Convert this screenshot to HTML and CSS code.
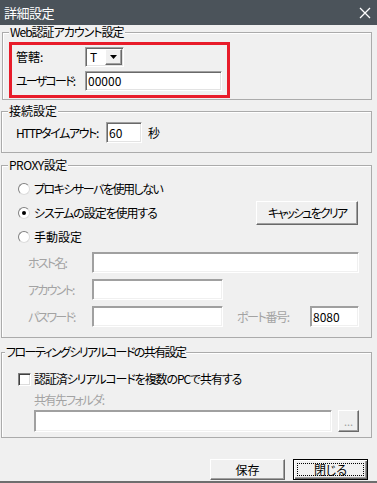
FILE: index.html
```html
<!DOCTYPE html>
<html lang="ja">
<head>
<meta charset="utf-8">
<title>詳細設定</title>
<link rel="stylesheet" href="styles.css">
</head>
<body>
<div class="window">
  <div class="titlebar">
    <span class="title">詳細設定</span>
    <svg class="close" width="12" height="12" viewBox="0 0 12 12"><path d="M1 1L11 11M11 1L1 11" stroke="#fff" stroke-width="1.3" fill="none"/></svg>
  </div>

  <div class="group g1">
    <div class="legend ls10">Web認証アカウント設定</div>
    <div class="redbox">
      <div class="row r20">
        <span class="lbl w69">管轄:</span>
        <div class="select">
          <span class="sel-val">T</span>
          <span class="sel-btn"><svg width="7" height="4" viewBox="0 0 7 4"><path d="M0 0H7L3.5 4Z" fill="#000"/></svg></span>
        </div>
      </div>
      <div class="row r20 mt4">
        <span class="lbl w69 ls18">ユーザコード:</span>
        <div class="input w137 h20">00000</div>
      </div>
    </div>
  </div>

  <div class="group g2">
    <div class="legend">接続設定</div>
    <div class="row r21 pl14 mt4">
      <span class="lbl w90 ls14">HTTPタイムアウト:</span>
      <div class="input w36 h21">60</div>
      <span class="lbl sec">秒</span>
    </div>
  </div>

  <div class="group g3">
    <div class="legend ls05">PROXY設定</div>
    <div class="radios">
      <div class="row r20"><span class="radio"></span><span class="lbl ls15">プロキシサーバを使用しない</span></div>
      <div class="row r24 between">
        <div class="row"><span class="radio on"></span><span class="lbl ls11">システムの設定を使用する</span></div>
        <button class="btn cache"><span class="ls18">キャッシュをクリア</span></button>
      </div>
      <div class="row r20"><span class="radio"></span><span class="lbl">手動設定</span></div>
    </div>
    <div class="fields">
      <div class="row r21"><span class="lbl dis w64 ls18">ホスト名:</span><div class="input dinput w267 h21"></div></div>
      <div class="row r21"><span class="lbl dis w64 ls18">アカウント:</span><div class="input dinput w131 h21"></div></div>
      <div class="row r21">
        <span class="lbl dis w64 ls18">パスワード:</span><div class="input dinput w131 h21"></div>
        <span class="lbl dis w73 ml14 ls14">ポート番号:</span><div class="input dinput w49 h21">8080</div>
      </div>
    </div>
  </div>

  <div class="group g4">
    <div class="legend l4 ls16">フローティングシリアルコードの共有設定</div>
    <div class="row r20 chkrow"><span class="check"></span><span class="lbl ls11">認証済シリアルコードを複数のPCで共有する</span></div>
    <div class="row r20 folderlbl"><span class="lbl dis ls14">共有先フォルダ:</span></div>
    <div class="row r22 folderrow">
      <div class="input dinput w298 h22"></div>
      <button class="btn dots">...</button>
    </div>
  </div>

  <div class="footer">
    <button class="btn action">保存</button>
    <button class="btn action default"><span class="focus">閉じる</span></button>
  </div>
</div>
</body>
</html>
```

FILE: styles.css
```css
* { box-sizing: border-box; }
html, body { margin: 0; padding: 0; }
body {
  width: 377px;
  height: 483px;
  background: #f0f0f0;
  font-family: "Noto Sans CJK JP", "Noto Sans", sans-serif;
  font-size: 12px;
  line-height: 14px;
  color: #000;
  font-feature-settings: "palt";
  overflow: hidden;
}
.window {
  width: 377px;
  height: 483px;
  display: flex;
  flex-direction: column;
  border-bottom: 2px solid #6e6e6e;
}
.titlebar {
  height: 25px;
  flex: none;
  background: #4b535a;
  color: #fff;
  display: flex;
  align-items: center;
  justify-content: space-between;
  padding: 0 6px 0 4px;
}
.title { font-size: 13px; letter-spacing: -0.5px; }
.close { display: block; }

.ls05 { letter-spacing: -0.5px; }
.ls10 { letter-spacing: -1px; }
.ls11 { letter-spacing: -1.1px; }
.ls14 { letter-spacing: -1.4px; }
.ls15 { letter-spacing: -1.5px; }
.ls16 { letter-spacing: -1.6px; }
.ls18 { letter-spacing: -1.8px; }

.group {
  margin-left: 1px;
  width: 371px;
  border: 1px solid #ababab;
  box-shadow: inset 1px 1px 0 #fff;
  flex: none;
}
.legend {
  margin: -8px 0 0 6px;
  width: fit-content;
  background: #f0f0f0;
  padding: 0 1px;
  line-height: 14px;
  height: 14px;
}
.l4 { margin-left: 3px; }

.row { display: flex; align-items: center; }
.r20 { height: 20px; }
.r21 { height: 21px; }
.r22 { height: 22px; }
.r24 { height: 24px; }
.between { justify-content: space-between; }
.mt4 { margin-top: 4px; }
.pl14 { padding-left: 14px; }
.ml14 { margin-left: 14px; }

.lbl { white-space: nowrap; }
.dis { color: #a3a3a3; }
.w64 { width: 64px; flex: none; }
.w69 { width: 69px; flex: none; }
.w73 { width: 73px; flex: none; }
.w90 { width: 90px; flex: none; }
.sec { margin-left: 6px; }

.input {
  background: #fff;
  border-top: 1px solid #a0a0a0;
  border-left: 1px solid #a0a0a0;
  border-right: 1px solid #fff;
  border-bottom: 1px solid #fff;
  box-shadow: inset 1px 1px 0 #696969, inset -1px -1px 0 #e3e3e3;
  padding: 0 2px;
  display: flex;
  align-items: center;
  flex: none;
}
.dinput { box-shadow: inset 1px 1px 0 #a0a0a0, inset -1px -1px 0 #f0f0f0; }
.w36 { width: 36px; }
.w49 { width: 49px; }
.w131 { width: 131px; }
.w137 { width: 137px; }
.w267 { width: 267px; }
.w298 { width: 298px; }
.h20 { height: 20px; }
.h21 { height: 21px; }
.h22 { height: 22px; }

/* group 1 */
.g1 { margin-top: 7px; margin-left: 2px; width: 370px; }
.redbox {
  margin: 3px 0 1px 6px;
  width: 221px;
  height: 56px;
  border: 3px solid #e81c2a;
  padding: 2px 0 0 4px;
}
.select {
  width: 39px;
  height: 20px;
  background: #fff;
  border-top: 1px solid #a0a0a0;
  border-left: 1px solid #a0a0a0;
  border-right: 1px solid #fff;
  border-bottom: 1px solid #fff;
  box-shadow: inset 1px 1px 0 #696969, inset -1px -1px 0 #e3e3e3;
  display: flex;
  align-items: stretch;
  padding: 1px 1px 1px 1px;
}
.sel-val { flex: 1; padding-left: 3px; line-height: 16px; }
.sel-btn {
  width: 17px;
  background: #f0f0f0;
  border-top: 1px solid #fff;
  border-left: 1px solid #fff;
  border-right: 1px solid #696969;
  border-bottom: 1px solid #696969;
  box-shadow: inset -1px -1px 0 #a0a0a0;
  display: flex;
  align-items: center;
  justify-content: center;
}
.sel-btn svg { display: block; }

/* group 2 */
.g2 { margin-top: 11px; height: 42px; }

/* group 3 */
.g3 { margin-top: 12px; height: 173px; }
.radios {
  margin-top: 7px;
  padding: 0 13px 0 16px;
  display: flex;
  flex-direction: column;
  gap: 2px;
}
.radio {
  width: 12px;
  height: 12px;
  border-radius: 50%;
  background: #fff;
  border: 1px solid;
  border-color: #808080 #dcdcdc #dcdcdc #808080;
  margin-right: 4px;
  flex: none;
  position: relative;
}
.radio.on::after {
  content: "";
  position: absolute;
  left: 3px;
  top: 3px;
  width: 4px;
  height: 4px;
  border-radius: 50%;
  background: #000;
}
.btn {
  font: inherit;
  font-feature-settings: "palt";
  color: #000;
  background: #f0f0f0;
  border-top: 1px solid #fff;
  border-left: 1px solid #fff;
  border-right: 1px solid #696969;
  border-bottom: 1px solid #696969;
  box-shadow: inset -1px -1px 0 #a0a0a0;
  padding: 0;
  margin: 0;
  display: flex;
  align-items: center;
  justify-content: center;
}
.cache { width: 102px; height: 24px; }
.fields {
  margin-top: 5px;
  padding-left: 26px;
  display: flex;
  flex-direction: column;
  gap: 6px;
}

/* group 4 */
.g4 { margin-top: 14px; height: 86px; }
.chkrow { margin-top: 10px; padding-left: 16px; }
.check {
  width: 13px;
  height: 13px;
  background: #fff;
  border-top: 1px solid #808080;
  border-left: 1px solid #808080;
  border-right: 1px solid #fff;
  border-bottom: 1px solid #fff;
  box-shadow: inset 1px 1px 0 #404040, inset -1px -1px 0 #dcdcdc;
  margin-right: 3px;
  flex: none;
}
.folderlbl { margin-top: 1px; padding-left: 32px; }
.folderrow { padding-left: 32px; gap: 6px; }
.dots { width: 21px; height: 22px; color: #a0a0a0; font-size: 11px; }

/* footer */
.footer {
  margin-top: 21px;
  padding-right: 9px;
  display: flex;
  justify-content: flex-end;
  gap: 8px;
}
.action { width: 75px; height: 21px; }
.default {
  border: 1px solid #000;
  box-shadow: inset 1px 1px 0 #fff, inset -1px -1px 0 #696969, inset -2px -2px 0 #a0a0a0;
  padding: 3px;
}
.focus {
  width: 100%;
  height: 100%;
  border: 1px dotted #000;
  display: flex;
  align-items: center;
  justify-content: center;
}
```
